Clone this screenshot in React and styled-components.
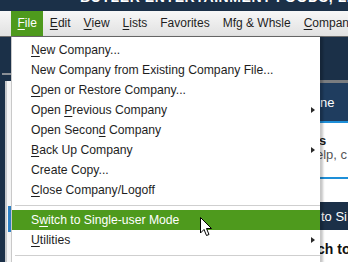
import React from "react";
import styled, { createGlobalStyle } from "styled-components";

const GlobalStyle = createGlobalStyle`
  html, body {
    margin: 0;
    padding: 0;
    background: #1b3048;
    font-family: "Liberation Sans", Arial, sans-serif;
    overflow: hidden;
  }
`;

const Screen = styled.div`
  position: relative;
  width: 348px;
  height: 262px;
  overflow: hidden;
  background: #1b3048;
  display: flex;
  flex-direction: column;
`;

const TitleBar = styled.div`
  height: 11px;
  background: #1b3048;
  display: flex;
  overflow: hidden;
`;

const AppDot = styled.div`
  width: 13px;
  height: 13px;
  border-radius: 50%;
  background: #3f9a2a;
  margin: -10px 0 0 2px;
`;

const TitleText = styled.div`
  color: #ffffff;
  font-weight: bold;
  font-size: 14px;
  letter-spacing: 0.6px;
  white-space: nowrap;
  margin: -11px 0 0 78px;
  line-height: 16px;
`;

const MenuBar = styled.div`
  height: 25px;
  display: flex;
  align-items: stretch;
  padding-left: 11px;
  background: linear-gradient(#f7f7f7, #e1e1e1);
  border-bottom: 1px solid #6d6d6d;
`;

const MenuItem = styled.div`
  display: flex;
  align-items: center;
  padding: 0 6.5px 1px;
  font-size: 12px;
  color: ${(p) => (p.$active ? "#ffffff" : "#1e1e1e")};
  background: ${(p) => (p.$active ? "#4e9a1d" : "transparent")};
  white-space: nowrap;
`;

const Key = styled.span`
  text-decoration: underline;
  text-underline-offset: 2px;
`;

const Workspace = styled.div`
  flex: 1;
  display: flex;
`;

const LeftStrip = styled.div`
  width: 11px;
  display: flex;
  flex-direction: column;
  padding-top: 36px;
`;

const LeftFrame = styled.div`
  flex: 1;
  border-top: 2px solid #8a8f96;
  margin-left: 2px;
  padding: 6px 0 0 3px;
  display: flex;
  flex-direction: column;
`;

const LeftPanel = styled.div`
  flex: 1;
  background: #f4f4f4;
  border-left: 2px solid #c7c9cc;
  display: flex;
  flex-direction: column;
  padding-top: 125px;
`;

const LeftMarker = styled.div`
  width: 3px;
  height: 26px;
  margin-left: 1px;
  background: #2c7fc4;
`;

const Middle = styled.div`
  flex: 1;
`;

const RightPanel = styled.div`
  width: 28px;
  display: flex;
  flex-direction: column;
  padding-top: 43px;
  overflow: hidden;
`;

const GreyRule = styled.div`
  height: 3px;
  background: #7a7d80;
`;

const TabBand = styled.div`
  height: 38px;
  background: #1f3d5f;
  border-bottom: 2px solid #1e8fd8;
  color: #ffffff;
  font-size: 13px;
  display: flex;
  align-items: center;
  white-space: nowrap;
`;

const WhiteArea = styled.div`
  flex: 1;
  background: #ffffff;
  display: flex;
  flex-direction: column;
  white-space: nowrap;
  font-size: 13px;
`;

const TipTitle = styled.div`
  font-weight: bold;
  color: #1a1a1a;
  margin: 11px 0 0 -9px;
  line-height: 14px;
`;

const TipText = styled.div`
  color: #555;
  line-height: 14px;
  margin-left: -4px;
`;

const BlueRule = styled.div`
  height: 2px;
  background: #1e8fd8;
  margin-top: 15px;
`;

const DarkButton = styled.div`
  margin-top: 23px;
  height: 28px;
  background: #1b3048;
  color: #ffffff;
  display: flex;
  align-items: center;
  padding-left: 1px;
`;

const BoldLine = styled.div`
  margin-top: 11px;
  font-weight: bold;
  font-size: 14px;
  color: #111;
  margin-left: -3px;
`;

const Dropdown = styled.div`
  position: absolute;
  left: 11px;
  top: 37px;
  width: 309px;
  bottom: -10px;
  background: #ffffff;
  border-left: 1px solid #c9c9c9;
  box-shadow: 3px 0 2px rgba(0, 0, 0, 0.22);
  padding-top: 3px;
  box-sizing: border-box;
`;

const Item = styled.div`
  height: 20px;
  display: flex;
  align-items: center;
  padding-left: 19px;
  padding-right: 5px;
  font-size: 12.2px;
  color: ${(p) => (p.$hot ? "#ffffff" : "#1e1e1e")};
  background: ${(p) => (p.$hot ? "#4e9a1d" : "transparent")};
  white-space: nowrap;
`;

const ItemLabel = styled.span`
  flex: 1;
`;

const Arrow = styled.span`
  width: 0;
  height: 0;
  border-top: 3.5px solid transparent;
  border-bottom: 3.5px solid transparent;
  border-left: 4px solid #2a2a2a;
`;

const Separator = styled.div`
  height: 10px;
  display: flex;
  align-items: center;
  padding-left: 3px;
  &::after {
    content: "";
    flex: 1;
    height: 1px;
    background: #cfcfcf;
  }
`;

const Pointer = styled.svg`
  position: absolute;
  left: 200px;
  top: 217px;
`;

const items = [
  { pre: "", key: "N", post: "ew Company..." },
  { pre: "New Company from Existing Company File...", key: "", post: "" },
  { pre: "", key: "O", post: "pen or Restore Company..." },
  { pre: "Open ", key: "P", post: "revious Company", sub: true },
  { pre: "Open Secon", key: "d", post: " Company" },
  { pre: "", key: "B", post: "ack Up Company", sub: true },
  { pre: "Create Copy...", key: "", post: "" },
  { pre: "", key: "C", post: "lose Company/Logoff" },
  { sep: true },
  { pre: "S", key: "w", post: "itch to Single-user Mode", hot: true },
  { pre: "", key: "U", post: "tilities", sub: true },
  { sep: true },
];

export default function App() {
  return (
    <>
      <GlobalStyle />
      <Screen>
        <TitleBar>
          <AppDot />
          <TitleText>BUTLER ENTERTAINMENT FOODS, LLC - QuickBooks</TitleText>
        </TitleBar>
        <MenuBar>
          <MenuItem $active>
            <Key>F</Key>ile
          </MenuItem>
          <MenuItem>
            <Key>E</Key>dit
          </MenuItem>
          <MenuItem>
            <Key>V</Key>iew
          </MenuItem>
          <MenuItem>
            <Key>L</Key>ists
          </MenuItem>
          <MenuItem>Favorites</MenuItem>
          <MenuItem>Mfg &amp; Whsle</MenuItem>
          <MenuItem>
            <Key>C</Key>ompany
          </MenuItem>
        </MenuBar>
        <Workspace>
          <LeftStrip>
            <LeftFrame>
              <LeftPanel>
                <LeftMarker />
              </LeftPanel>
            </LeftFrame>
          </LeftStrip>
          <Middle />
          <RightPanel>
            <GreyRule />
            <TabBand>ne</TabBand>
            <WhiteArea>
              <TipTitle>os</TipTitle>
              <TipText>elp, c</TipText>
              <BlueRule />
              <DarkButton>to Si</DarkButton>
              <BoldLine>ch to</BoldLine>
            </WhiteArea>
          </RightPanel>
        </Workspace>

        <Dropdown>
          {items.map((it, i) =>
            it.sep ? (
              <Separator key={i} />
            ) : (
              <Item key={i} $hot={it.hot}>
                <ItemLabel>
                  {it.pre}
                  {it.key && <Key>{it.key}</Key>}
                  {it.post}
                </ItemLabel>
                {it.sub && <Arrow />}
              </Item>
            )
          )}
        </Dropdown>

        <Pointer width="13" height="20" viewBox="0 0 13 20">
          <path
            d="M0.5 0.5 L0.5 16 L4 12.5 L6.5 18.5 L9 17.5 L6.5 11.5 L11.5 11.5 Z"
            fill="#ffffff"
            stroke="#000000"
            strokeWidth="1"
            strokeLinejoin="miter"
          />
        </Pointer>
      </Screen>
    </>
  );
}
